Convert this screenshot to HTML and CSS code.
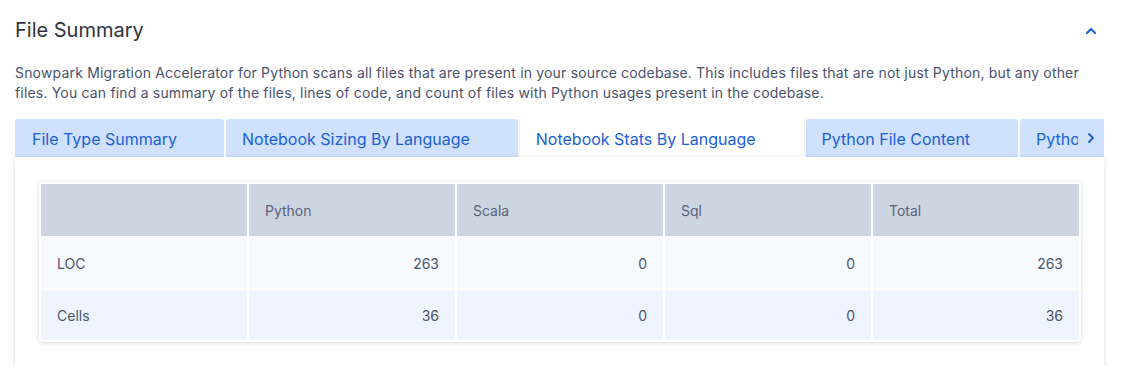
FILE: index.html
```html
<!DOCTYPE html>
<html lang="en">
<head>
  <meta charset="UTF-8">
  <title>File Summary</title>
  <link rel="stylesheet" href="styles.css">
</head>
<body>

  <div class="summary">
    <div class="summary-head">
      <h2>File Summary</h2>
      <svg class="collapse" width="14" height="10" viewBox="0 0 14 10">
        <path d="M3 7 L7 3 L11 7" fill="none" stroke="#1a66e0" stroke-width="2.2" stroke-linecap="round" stroke-linejoin="round"/>
      </svg>
    </div>

    <p class="intro">Snowpark Migration Accelerator for Python scans all files that are present in your source codebase. This includes files that are not just Python, but any other files. You can find a summary of the files, lines of code, and count of files with Python usages present in the codebase.</p>

    <div class="tabs">
      <div class="tab">File Type Summary</div>
      <div class="tab">Notebook Sizing By Language</div>
      <div class="tab active">Notebook Stats By Language</div>
      <div class="tab">Python File Content</div>
      <div class="tab">Python File Sizing</div>
      <div class="tab-scroll">
        <svg width="10" height="12" viewBox="0 0 10 12">
          <path d="M3 2 L7 6 L3 10" fill="none" stroke="#1a5fd0" stroke-width="1.8" stroke-linecap="round" stroke-linejoin="round"/>
        </svg>
      </div>
    </div>

    <div class="panel">
      <table>
        <tr>
          <th></th>
          <th>Python</th>
          <th>Scala</th>
          <th>Sql</th>
          <th>Total</th>
        </tr>
        <tr>
          <td class="label">LOC</td>
          <td>263</td>
          <td>0</td>
          <td>0</td>
          <td>263</td>
        </tr>
        <tr>
          <td class="label">Cells</td>
          <td>36</td>
          <td>0</td>
          <td>0</td>
          <td>36</td>
        </tr>
      </table>
    </div>
  </div>

</body>
</html>
```

FILE: styles.css
```css
body {
  margin: 0;
  background: #fff;
  font-family: Inter, "Noto Sans", sans-serif;
}
.summary {
  width: 1089px;
  margin-left: 15px;
  padding-top: 16px;
}
.summary-head {
  display: flex;
  align-items: center;
  justify-content: space-between;
}
h2 {
  margin: 0;
  font-size: 20px;
  font-weight: 400;
  line-height: 28px;
  color: #30343d;
}
.collapse {
  margin-right: 6px;
  margin-top: 2px;
}
.intro {
  margin: 19px 0 15px;
  font-size: 14px;
  line-height: 20px;
  letter-spacing: 0.18px;
  color: #4a526c;
}
.tabs {
  position: relative;
  display: flex;
  align-items: flex-end;
  gap: 2px;
  height: 39px;
  overflow: hidden;
}
.tab {
  flex: none;
  box-sizing: border-box;
  height: 38px;
  line-height: 40px;
  padding: 0 48px 0 16px;
  background: #d0e1fd;
  color: #1a60d6;
  font-size: 16px;
  border-radius: 3px 3px 0 0;
  white-space: nowrap;
}
.tab:first-child {
  width: 209px;
  padding-left: 17px;
}
.tab.active {
  height: 39px;
  line-height: 42px;
  background: #fff;
  box-shadow: 0 0 4px rgba(0, 0, 0, 0.12);
  position: relative;
  z-index: 1;
}
.tab-scroll {
  position: absolute;
  right: 0;
  bottom: 0;
  width: 26px;
  height: 38px;
  background: #d0e1fd;
  display: flex;
  align-items: center;
  justify-content: center;
}
.panel {
  position: relative;
  z-index: 2;
  background: #fff;
  padding: 25px 23px 24px 24px;
  box-shadow: 0 1px 5px rgba(0, 0, 0, 0.15);
}
table {
  width: 100%;
  border-collapse: separate;
  border-spacing: 2px;
  background: #fff;
  border-radius: 4px;
  box-shadow: 0 1px 4px rgba(0, 0, 0, 0.16);
  table-layout: fixed;
  font-size: 14px;
}
th, td {
  padding: 0 16px;
}
th {
  height: 52px;
  background: #cdd5e3;
  color: #5a6379;
  font-weight: 400;
  text-align: left;
}
td {
  height: 50px;
  text-align: right;
  color: #4b5470;
}
td.label {
  text-align: left;
}
tr:nth-child(2) td {
  background: #f6f9fe;
}
tr:nth-child(3) td {
  background: #eef5fe;
}
```
